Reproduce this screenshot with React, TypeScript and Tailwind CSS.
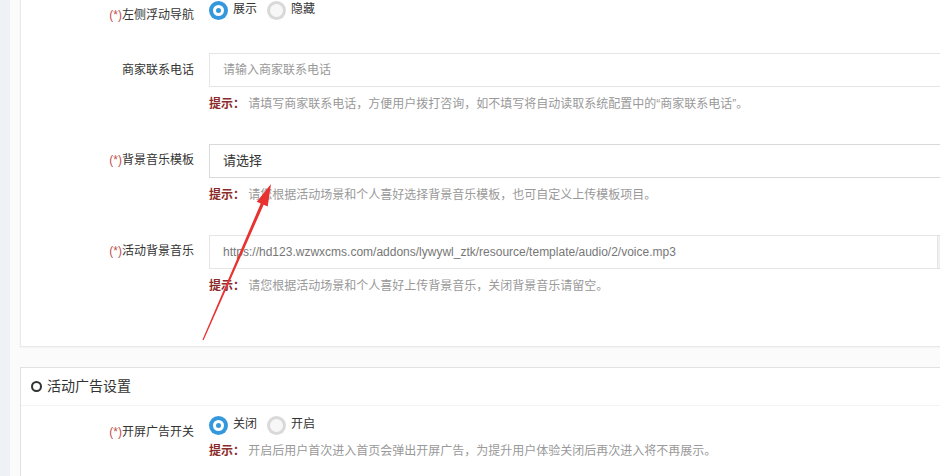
const font = { fontFamily: '"Liberation Sans", "Noto Sans CJK SC", sans-serif' };

function Radio({ checked, label }: { checked?: boolean; label: string }) {
  return (
    <label className="flex items-center mr-[10px]">
      {checked ? (
        <span className="w-[19px] h-[19px] rounded-full bg-[#3598dc] flex items-center justify-center">
          <span className="w-[11px] h-[11px] rounded-full bg-white flex items-center justify-center">
            <span className="w-[5px] h-[5px] rounded-full bg-[#3598dc]" />
          </span>
        </span>
      ) : (
        <span className="w-[19px] h-[19px] rounded-full bg-[#d9d9d9] flex items-center justify-center">
          <span className="w-[13px] h-[13px] rounded-full bg-[#f7f7f7]" />
        </span>
      )}
      <span className="ml-[5px] text-[12px] leading-[16px] text-[#333] -mt-[3px]">{label}</span>
    </label>
  );
}

function Label({ text, req, lh = 'leading-[34px]' }: { text: string; req?: boolean; lh?: string }) {
  return (
    <div className={`w-[173px] shrink-0 text-right text-[12px] text-[#333] ${lh}`}>
      {req && <span className="text-[#c0504d]">(*)</span>}
      {text}
    </div>
  );
}

function Hint({ children }: { children: React.ReactNode }) {
  return (
    <div className="mt-[7px] text-[12px] leading-[20px] text-[#999] whitespace-nowrap">
      <span className="font-bold text-[#8b2b2b]">提示：</span> {children}
    </div>
  );
}

export default function App() {
  return (
    <div className="relative w-[940px] h-[476px] overflow-hidden bg-[#fbfbfc] flex" style={font}>
      <div className="w-[10px] shrink-0 bg-[#eef1f5]" />
      <div className="flex-1 pl-[10px] min-w-0">
        {/* 基础设置 */}
        <div className="bg-white border-l border-b border-[#e9e9e9] shadow-[0_1px_2px_rgba(0,0,0,0.04)] pb-[50px]">
          <div className="flex h-[23px]">
            <div className="w-[173px] shrink-0 pt-[7px] text-right text-[12px] leading-[16px] text-[#333]">
              <span className="text-[#c0504d]">(*)</span>左侧浮动导航
            </div>
            <div className="ml-[15px] flex items-start pt-[1px]">
              <Radio checked label="展示" />
              <Radio label="隐藏" />
            </div>
          </div>

          <div className="flex mt-[30px]">
            <Label text="商家联系电话" />
            <div className="ml-[15px]">
              <div className="w-[760px] h-[34px] border border-[#e5e5e5] px-[13px] text-[12px] leading-[32px] text-[#999]">
                请输入商家联系电话
              </div>
              <Hint>请填写商家联系电话，方便用户拨打咨询，如不填写将自动读取系统配置中的“商家联系电话”。</Hint>
            </div>
          </div>

          <div className="flex mt-[30px]">
            <Label text="背景音乐模板" req lh="leading-[32px]" />
            <div className="ml-[15px]">
              <div className="w-[760px] h-[34px] border border-[#d9d9d9] px-[13px] text-[13px] leading-[32px] text-[#333]">
                请选择
              </div>
              <Hint>请您根据活动场景和个人喜好选择背景音乐模板，也可自定义上传模板项目。</Hint>
            </div>
          </div>

          <div className="flex mt-[30px]">
            <Label text="活动背景音乐" req lh="leading-[32px]" />
            <div className="ml-[15px]">
              <div className="flex">
                <div className="w-[729px] h-[34px] border border-[#e5e5e5] px-[13px] text-[12px] leading-[32px] text-[#777] whitespace-nowrap">
                  https://hd123.wzwxcms.com/addons/lywywl_ztk/resource/template/audio/2/voice.mp3
                </div>
                <div className="w-[60px] h-[34px] border border-l-0 border-[#dcdcdc] bg-[#f0f0f0]" />
              </div>
              <Hint>请您根据活动场景和个人喜好上传背景音乐，关闭背景音乐请留空。</Hint>
            </div>
          </div>
        </div>

        {/* 活动广告设置 */}
        <div className="mt-[20px] bg-white border-l border-t border-[#e2e2e2] h-[200px]">
          <div className="h-[38px] flex items-center pl-[10px] border-b border-[#f3f3f3]">
            <span className="w-[11px] h-[11px] rounded-full border-2 border-[#333]" />
            <span className="ml-[5px] text-[14px] text-[#333]">活动广告设置</span>
          </div>
          <div className="flex pt-[9px]">
            <div className="w-[173px] shrink-0 pt-[9px] text-right text-[12px] leading-[16px] text-[#333]">
              <span className="text-[#c0504d]">(*)</span>开屏广告开关
            </div>
            <div className="ml-[15px]">
              <div className="flex items-start pt-[1px]">
                <Radio checked label="关闭" />
                <Radio label="开启" />
              </div>
              <div className="-mt-[1px]">
                <Hint>开启后用户首次进入首页会弹出开屏广告，为提升用户体验关闭后再次进入将不再展示。</Hint>
              </div>
            </div>
          </div>
        </div>
      </div>

      {/* 标注箭头 */}
      <svg className="absolute inset-0 pointer-events-none" width="940" height="476" viewBox="0 0 940 476">
        <polygon
          points="202.45,339.76 260.73,203.56 256.7,201.8 271,184 267.7,206.6 263.67,204.84 203.55,340.24"
          fill="#e8322f"
        />
      </svg>
    </div>
  );
}
